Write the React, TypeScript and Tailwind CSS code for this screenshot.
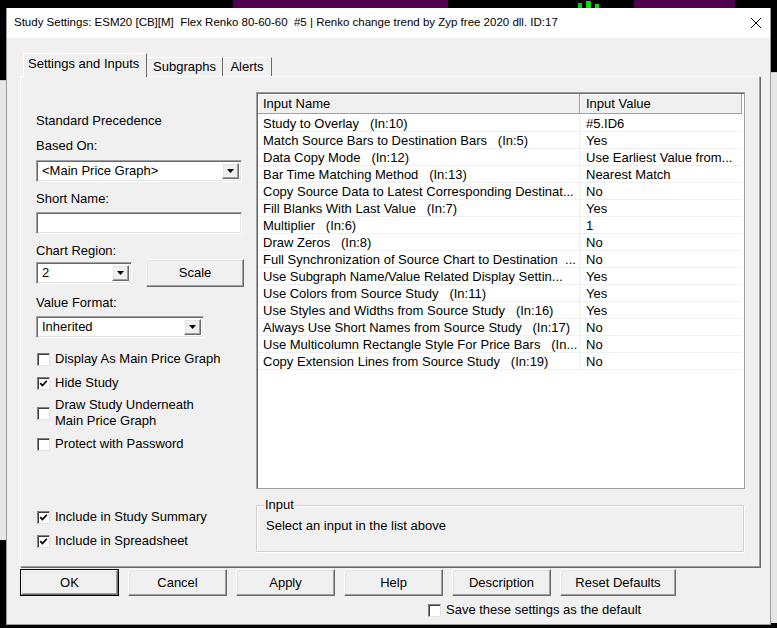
import React from 'react';

const sunken =
  'border border-t-[#a0a0a0] border-l-[#a0a0a0] border-r-white border-b-white shadow-[inset_1px_1px_0_#696969,inset_-1px_-1px_0_#e3e3e3]';
const raised =
  'border border-t-white border-l-white border-r-[#696969] border-b-[#696969] shadow-[inset_-1px_-1px_0_#a0a0a0,inset_1px_1px_0_#e3e3e3]';

const rows: [string, string][] = [
  ['Study to Overlay   (In:10)', '#5.ID6'],
  ['Match Source Bars to Destination Bars   (In:5)', 'Yes'],
  ['Data Copy Mode   (In:12)', 'Use Earliest Value from...'],
  ['Bar Time Matching Method   (In:13)', 'Nearest Match'],
  ['Copy Source Data to Latest Corresponding Destinat...', 'No'],
  ['Fill Blanks With Last Value   (In:7)', 'Yes'],
  ['Multiplier   (In:6)', '1'],
  ['Draw Zeros   (In:8)', 'No'],
  ['Full Synchronization of Source Chart to Destination  ...', 'No'],
  ['Use Subgraph Name/Value Related Display Settin...', 'Yes'],
  ['Use Colors from Source Study   (In:11)', 'Yes'],
  ['Use Styles and Widths from Source Study   (In:16)', 'Yes'],
  ['Always Use Short Names from Source Study   (In:17)', 'No'],
  ['Use Multicolumn Rectangle Style For Price Bars   (In...', 'No'],
  ['Copy Extension Lines from Source Study   (In:19)', 'No'],
];

function Check({ checked }: { checked?: boolean }) {
  return (
    <span className="flex h-[13px] w-[13px] shrink-0 items-center justify-center border border-t-[#808080] border-l-[#808080] border-r-[#e3e3e3] border-b-[#e3e3e3] bg-white shadow-[inset_1px_1px_0_#404040]">
      {checked && (
        <svg width="9" height="9" viewBox="0 0 9 9">
          <path d="M1.2 4.2 L3.5 6.6 L7.8 1.8" stroke="#000" strokeWidth="1.7" fill="none" />
        </svg>
      )}
    </span>
  );
}

function Combo({ text, className }: { text: string; className: string }) {
  return (
    <div className={`flex h-[22px] bg-white p-[2px] ${sunken} ${className}`}>
      <span className="flex-1 pl-[3px] leading-[16px]">{text}</span>
      <span className={`flex w-[17px] items-center justify-center bg-[#f0f0f0] ${raised}`}>
        <svg width="7" height="4" viewBox="0 0 7 4">
          <polygon points="0,0 7,0 3.5,4" fill="#000" />
        </svg>
      </span>
    </div>
  );
}

function Btn({ label, className, def }: { label: string; className: string; def?: boolean }) {
  return (
    <div className={`h-[27px] ${def ? 'border border-black' : ''} ${className}`}>
      <div className={`flex h-full items-center justify-center bg-[#f0f0f0] ${raised}`}>{label}</div>
    </div>
  );
}

export default function App() {
  return (
    <div
      className="relative h-[628px] w-[777px] overflow-hidden bg-black text-[13px] text-black"
      style={{ fontFamily: '"Liberation Sans", Arial, sans-serif' }}
    >
      {/* desktop behind the dialog */}
      <div className="absolute left-[233px] top-0 h-[8px] w-[215px] bg-[#4f004f]" />
      <div className="absolute left-[634px] top-0 h-[8px] w-[101px] bg-[#4f004f]" />
      <div className="absolute left-[578px] top-[3px] h-[5px] w-[4px] bg-[#00d000]" />
      <div className="absolute left-[586px] top-[1px] h-[7px] w-[5px] bg-[#00e000]" />
      <div className="absolute left-[595px] top-[4px] h-[4px] w-[4px] bg-[#00e000]" />
      <div className="absolute left-[0px] top-[80px] h-[460px] w-[6px] bg-[#e6e6e6] border-t border-[#c8c8c8]" />
      <div className="absolute left-[771px] top-[72px] h-[551px] w-[6px] bg-[#e6e6e6] border-t border-[#c8c8c8]" />

      {/* dialog window */}
      <div className="absolute left-[6px] top-[8px] flex h-[617px] w-[765px] flex-col border-x border-b border-[#9a9a9a] bg-[#f0f0f0]">
        <div className="flex h-[30px] shrink-0 items-center justify-between bg-white pl-[7px] pr-[5px]">
          <span className="whitespace-pre text-[11.5px]">
            Study Settings: ESM20 [CB][M]  Flex Renko 80-60-60  #5 | Renko change trend by Zyp free 2020 dll. ID:17
          </span>
          <svg width="12" height="12" viewBox="0 0 12 12" className="mr-[3px]">
            <path d="M1 1 L11 11 M11 1 L1 11" stroke="#000" strokeWidth="1" />
          </svg>
        </div>

        <div className="flex flex-1 flex-col pl-[13px] pt-[15px]">
          {/* tabs */}
          <div className="flex h-[23px] items-end pl-[3px]">
            <div className="relative z-10 -mb-[1px] flex h-[24px] w-[124px] items-start justify-start border-l border-t border-r border-l-white border-t-white border-r-[#696969] bg-[#f0f0f0] pl-[4px]">
              Settings and Inputs
            </div>
            <div className="flex h-[19px] w-[76px] items-center justify-center border-t border-r border-t-white border-r-[#696969]">
              Subgraphs
            </div>
            <div className="flex h-[19px] w-[49px] items-center justify-center border-t border-r border-t-white border-r-[#696969]">
              Alerts
            </div>
          </div>

          {/* tab panel */}
          <div className="flex h-[491px] w-[740px] border border-t-white border-l-white border-r-[#a0a0a0] border-b-[#a0a0a0] shadow-[1px_1px_0_#696969]">
            <div className="flex w-[223px] flex-col pl-[15px] leading-[16px]">
              <div className="mt-[36px]">Standard Precedence</div>
              <div className="mt-[9px]">Based On:</div>
              <Combo text="<Main Price Graph>" className="mt-[6px] w-[206px]" />
              <div className="mt-[9px]">Short Name:</div>
              <div className={`mt-[5px] h-[22px] w-[206px] bg-white ${sunken}`} />
              <div className="mt-[9px]">Chart Region:</div>
              <div className="flex h-[28px] items-center">
                <Combo text="2" className="w-[96px]" />
                <Btn label="Scale" className="ml-[14px] w-[98px] h-[28px]" />
              </div>
              <div className="mt-[8px]">Value Format:</div>
              <Combo text="Inherited" className="mt-[5px] w-[168px]" />
              <label className="mt-[13px] flex items-center gap-[5px] pl-[1px]">
                <Check />
                Display As Main Price Graph
              </label>
              <label className="mt-[8px] flex items-center gap-[5px] pl-[1px]">
                <Check checked />
                Hide Study
              </label>
              <label className="mt-[6px] flex items-center gap-[5px] pl-[1px]">
                <Check />
                <span>
                  Draw Study Underneath
                  <br />
                  Main Price Graph
                </span>
              </label>
              <label className="mt-[7px] flex items-center gap-[5px] pl-[1px]">
                <Check />
                Protect with Password
              </label>
              <label className="mt-[57px] flex items-center gap-[5px] pl-[1px]">
                <Check checked />
                Include in Study Summary
              </label>
              <label className="mt-[8px] flex items-center gap-[5px] pl-[1px]">
                <Check checked />
                Include in Spreadsheet
              </label>
            </div>

            <div className="ml-[12px] flex flex-col pt-[15px]">
              <div className="h-[397px] w-[489px] border border-[#a0a0a0] bg-white shadow-[inset_1px_1px_0_#696969] p-[1px]">
                <div className="flex h-[20px] leading-[19px]">
                  <div className="w-[322px] border-b border-r border-[#a0a0a0] bg-[#f0f0f0] pl-[5px] shadow-[inset_1px_1px_0_white]">
                    Input Name
                  </div>
                  <div className="w-[162px] border-b border-r border-[#a0a0a0] bg-[#f0f0f0] pl-[6px] shadow-[inset_1px_1px_0_white]">
                    Input Value
                  </div>
                </div>
                <div className="pt-[1px]">
                  {rows.map(([name, value]) => (
                    <div key={name} className="flex h-[17px] w-[484px] border-b border-[#f0f0f0] leading-[17px]">
                      <div className="w-[322px] overflow-hidden whitespace-pre border-r border-[#f0f0f0] pl-[5px]">
                        {name}
                      </div>
                      <div className="w-[162px] overflow-hidden whitespace-pre pl-[6px]">{value}</div>
                    </div>
                  ))}
                </div>
              </div>

              <fieldset className="mt-[8px] h-[55px] w-[488px] border border-[#d0d0d0] pl-[9px] shadow-[inset_1px_1px_0_white,1px_1px_0_white]">
                <legend className="ml-[-1px] leading-[16px]">Input</legend>
                <div className="mt-[5px] leading-[16px]">Select an input in the list above</div>
              </fieldset>
            </div>
          </div>

          {/* buttons */}
          <div className="mt-[2px] flex gap-[9px]">
            <Btn label="OK" className="w-[99px]" def />
            <Btn label="Cancel" className="w-[99px]" />
            <Btn label="Apply" className="w-[99px]" />
            <Btn label="Help" className="w-[99px]" />
            <Btn label="Description" className="w-[99px]" />
            <Btn label="Reset Defaults" className="w-[116px]" />
          </div>
          <label className="ml-[408px] mt-[6px] flex items-center gap-[5px] leading-[16px]">
            <Check />
            Save these settings as the default
          </label>
        </div>
      </div>
    </div>
  );
}
